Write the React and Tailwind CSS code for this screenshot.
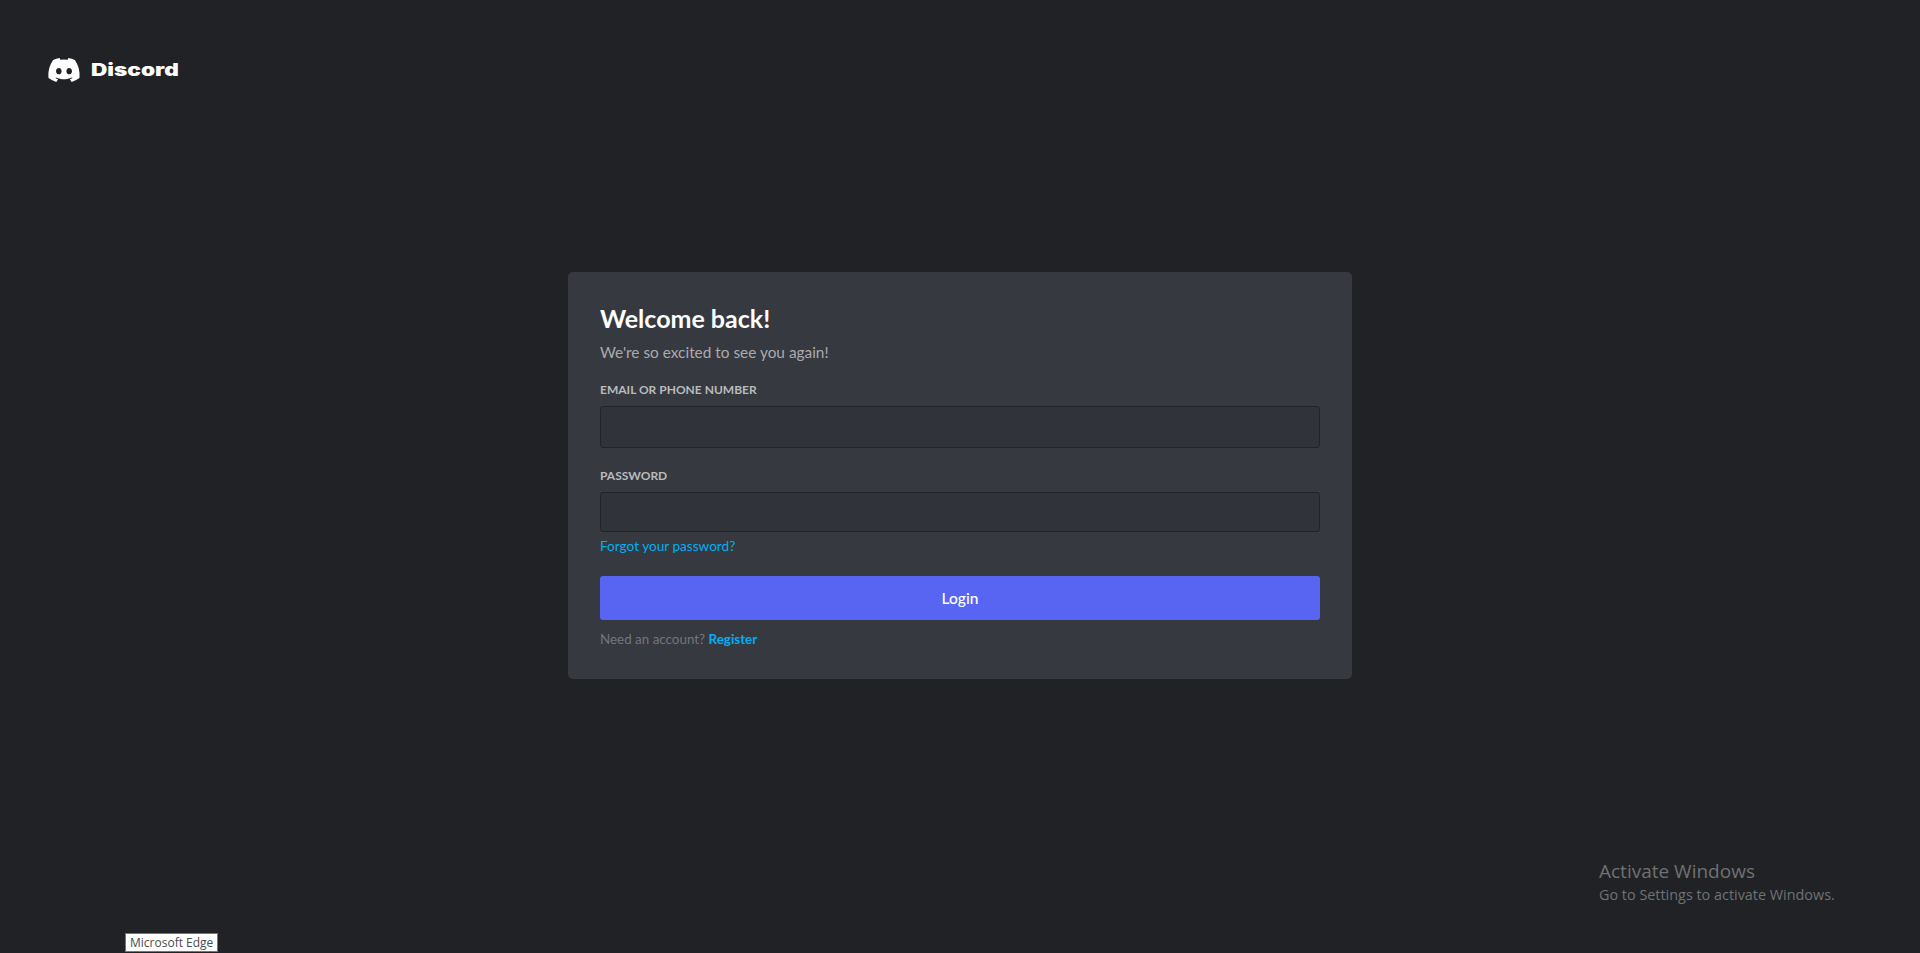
import React from 'react'
import { FaDiscord } from 'react-icons/fa'

const Field = ({ label, type, height, className }) => (
  <div className={className}>
    <label className="block text-xs leading-4 font-bold uppercase text-[#b9bbbe]">
      {label}
    </label>
    <input
      type={type}
      className={`mt-2 block w-full ${height} rounded-[3px] border border-[#222428] bg-[#303339] outline-none`}
    />
  </div>
)

export default function App() {
  return (
    <div className="relative flex h-[953px] items-center justify-center overflow-hidden bg-[#202225] font-['Lato',sans-serif]">
      {/* logo */}
      <div className="absolute left-[47px] top-[53px] flex items-center gap-[10px] text-white">
        <FaDiscord className="h-[34px] w-[34px]" />
        <span className="origin-left scale-x-[1.33] font-['Inter',sans-serif] text-[17px] leading-6 font-black">
          Discord
        </span>
      </div>

      <form className="mb-[2px] w-[784px] rounded-[5px] bg-[#36393f] px-8 pt-8 pb-[30px]">
        <h1 className="text-[25px] leading-[29px] font-bold text-white">
          Welcome back!
        </h1>
        <p className="mt-[9px] text-[15.4px] leading-5 text-[#a9abaf]">
          We're so excited to see you again!
        </p>
        <Field
          className="mt-5"
          label="Email or Phone Number"
          type="text"
          height="h-[42px]"
        />
        <Field
          className="mt-5"
          label="Password"
          type="password"
          height="h-10"
        />
        <a className="mt-1 block text-[13.6px] leading-5 text-[#00aff4]" href="#">
          Forgot your password?
        </a>
        <button
          type="button"
          className="mt-5 block h-11 w-full rounded-[3px] bg-[#5865f2] pt-[2px] text-[15.5px] font-medium text-white"
        >
          Login
        </button>
        <p className="mt-[9px] text-[13.4px] leading-5 text-[#72767d]">
          Need an account?{' '}
          <a className="font-bold text-[#00aff4]" href="#">
            Register
          </a>
        </p>
      </form>

      {/* windows watermark */}
      <div className="absolute left-[1599px] top-[858px] font-['Open_Sans',sans-serif] text-[#6f7174]">
        <div className="text-[19px] leading-[27px]">Activate Windows</div>
        <div className="text-[14.4px] leading-[19px]">
          Go to Settings to activate Windows.
        </div>
      </div>

      {/* taskbar tooltip */}
      <div className="absolute left-[125px] top-[933px] border border-[#767676] bg-white px-[4px] font-['Open_Sans',sans-serif] text-xs leading-[17px] text-[#4c4c4c]">
        Microsoft Edge
      </div>
    </div>
  )
}
